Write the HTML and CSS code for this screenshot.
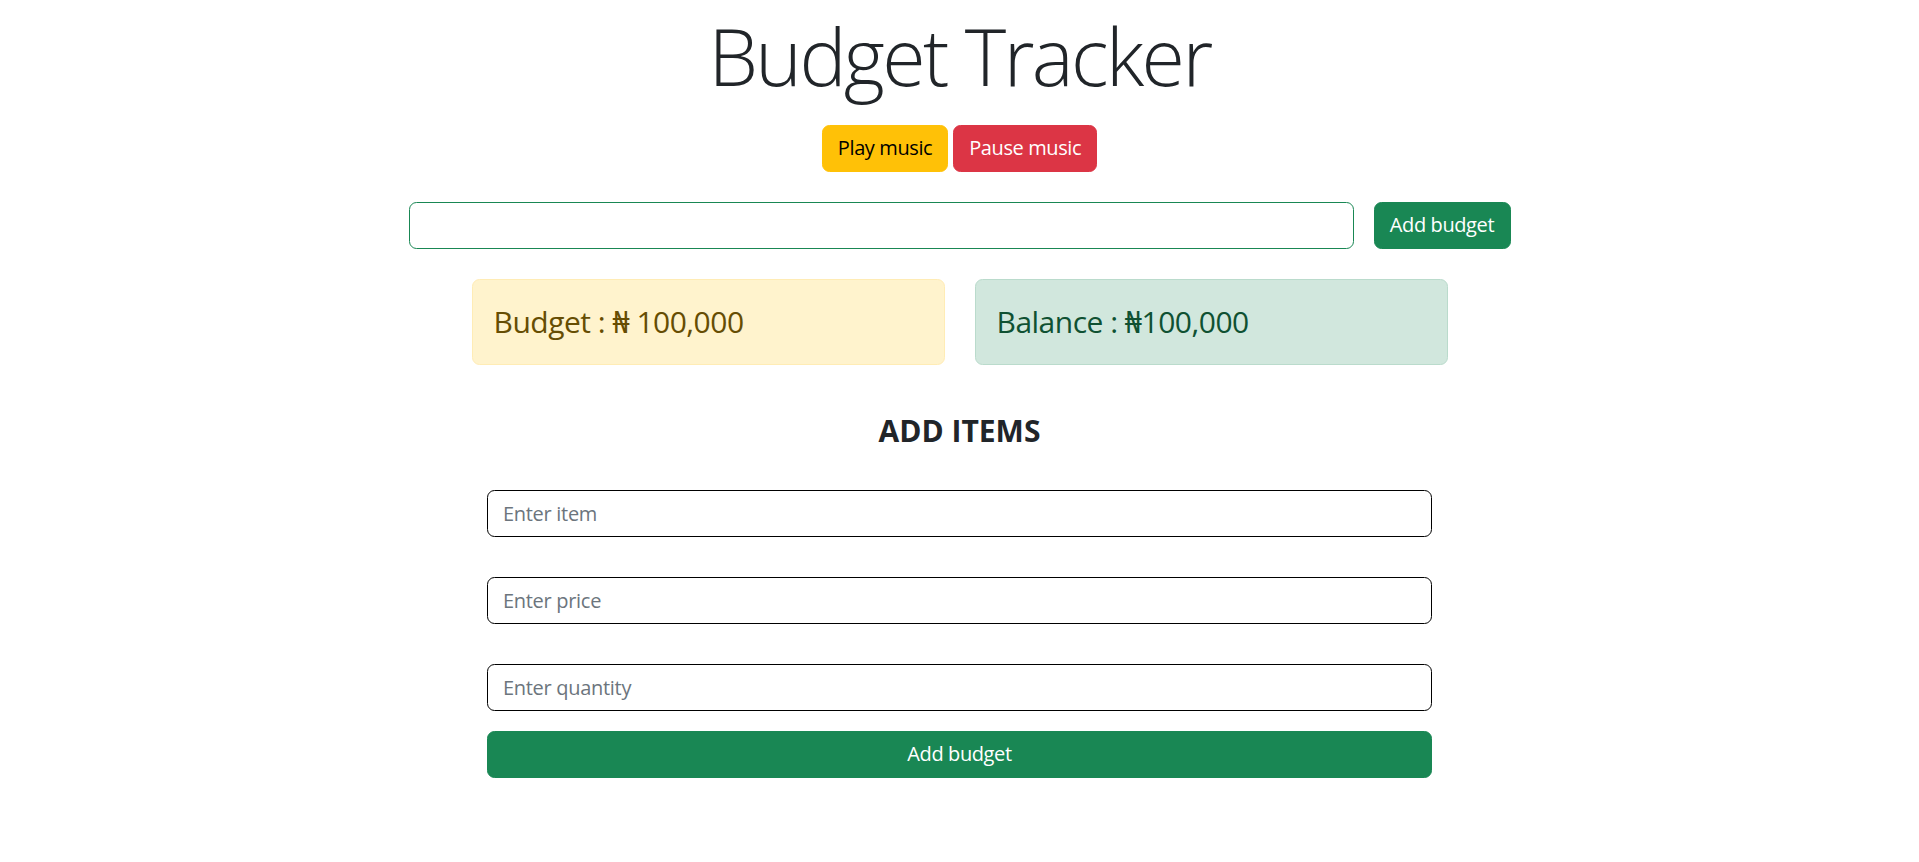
FILE: index.html
```html
<!DOCTYPE html>
<html lang="en">
<head>
<meta charset="utf-8">
<title>Budget Tracker</title>
<link rel="stylesheet" href="styles.css">
</head>
<body>
<main class="page">
  <h1 class="title">Budget Tracker</h1>
  <div class="music">
    <button class="btn btn-warning">Play music</button>
    <button class="btn btn-danger">Pause music</button>
  </div>
  <div class="budget-row">
    <input class="budget-input" type="text">
    <button class="btn btn-success">Add budget</button>
  </div>
  <div class="cards">
    <div class="card card-warning">Budget : ₦ 100,000</div>
    <div class="card card-success">Balance : ₦100,000</div>
  </div>
  <h2 class="section-title">ADD ITEMS</h2>
  <form class="items-form">
    <input class="field" type="text" placeholder="Enter item">
    <input class="field" type="text" placeholder="Enter price">
    <input class="field" type="text" placeholder="Enter quantity">
    <button type="button" class="btn btn-success btn-block">Add budget</button>
  </form>
</main>
</body>
</html>
```

FILE: styles.css
```css
* { box-sizing: border-box; }
html, body { margin: 0; padding: 0; background: #fff; }
body {
  font-family: "Open Sans", "Noto Sans", sans-serif;
  color: #212529;
  font-size: 20px;
  line-height: 1.5;
}
.page {
  display: flex;
  flex-direction: column;
  align-items: center;
}
.title {
  margin: 0;
  font-size: 79px;
  font-weight: 300;
  letter-spacing: -2.6px;
  line-height: 1.2;
  padding-top: 9px;
}
.music {
  display: flex;
  gap: 5px;
  margin-top: 21px;
}
.btn {
  font-family: inherit;
  font-size: 20px;
  line-height: 30px;
  letter-spacing: -0.4px;
  padding: 7.5px 15px;
  border: 1px solid transparent;
  border-radius: 7.5px;
  cursor: pointer;
}
.btn-warning { background: #ffc107; border-color: #ffc107; color: #000; }
.btn-danger { background: #dc3545; border-color: #dc3545; color: #fff; }
.btn-success { background: #198754; border-color: #198754; color: #fff; }
.budget-row {
  display: flex;
  gap: 20px;
  width: 1102px;
  margin-top: 30px;
}
.budget-input {
  width: 945px;
  height: 47px;
  border: 1px solid #198754;
  border-radius: 7.5px;
  font-family: inherit;
  font-size: 20px;
  padding: 7.5px 15px;
}
.budget-row .btn { flex: 1; padding: 7.5px 0; }
.cards {
  display: flex;
  gap: 30px;
  margin-top: 30px;
}
.card {
  width: 473px;
  height: 86px;
  padding: 0 21px;
  display: flex;
  align-items: center;
  font-size: 30px;
  letter-spacing: -0.5px;
  border: 1px solid;
  border-radius: 7.5px;
}
.card-warning { background: #fff3cd; border-color: #ffecb5; color: #664d03; }
.card-success { background: #d1e7dd; border-color: #badbcc; color: #0f5132; }
.section-title {
  margin: 48px 0 0;
  font-size: 30px;
  font-weight: 700;
  line-height: 1.2;
}
.items-form {
  width: 945px;
  margin-top: 41px;
  display: flex;
  flex-direction: column;
}
.field {
  height: 47px;
  border: 1px solid #000;
  border-radius: 7.5px;
  font-family: inherit;
  font-size: 20px;
  letter-spacing: -0.3px;
  padding: 7.5px 15px;
  color: #212529;
  margin-bottom: 40px;
}
.field:nth-of-type(3) { margin-bottom: 20px; }
.field::placeholder { color: #6c757d; }
.btn-block { width: 100%; }
```
